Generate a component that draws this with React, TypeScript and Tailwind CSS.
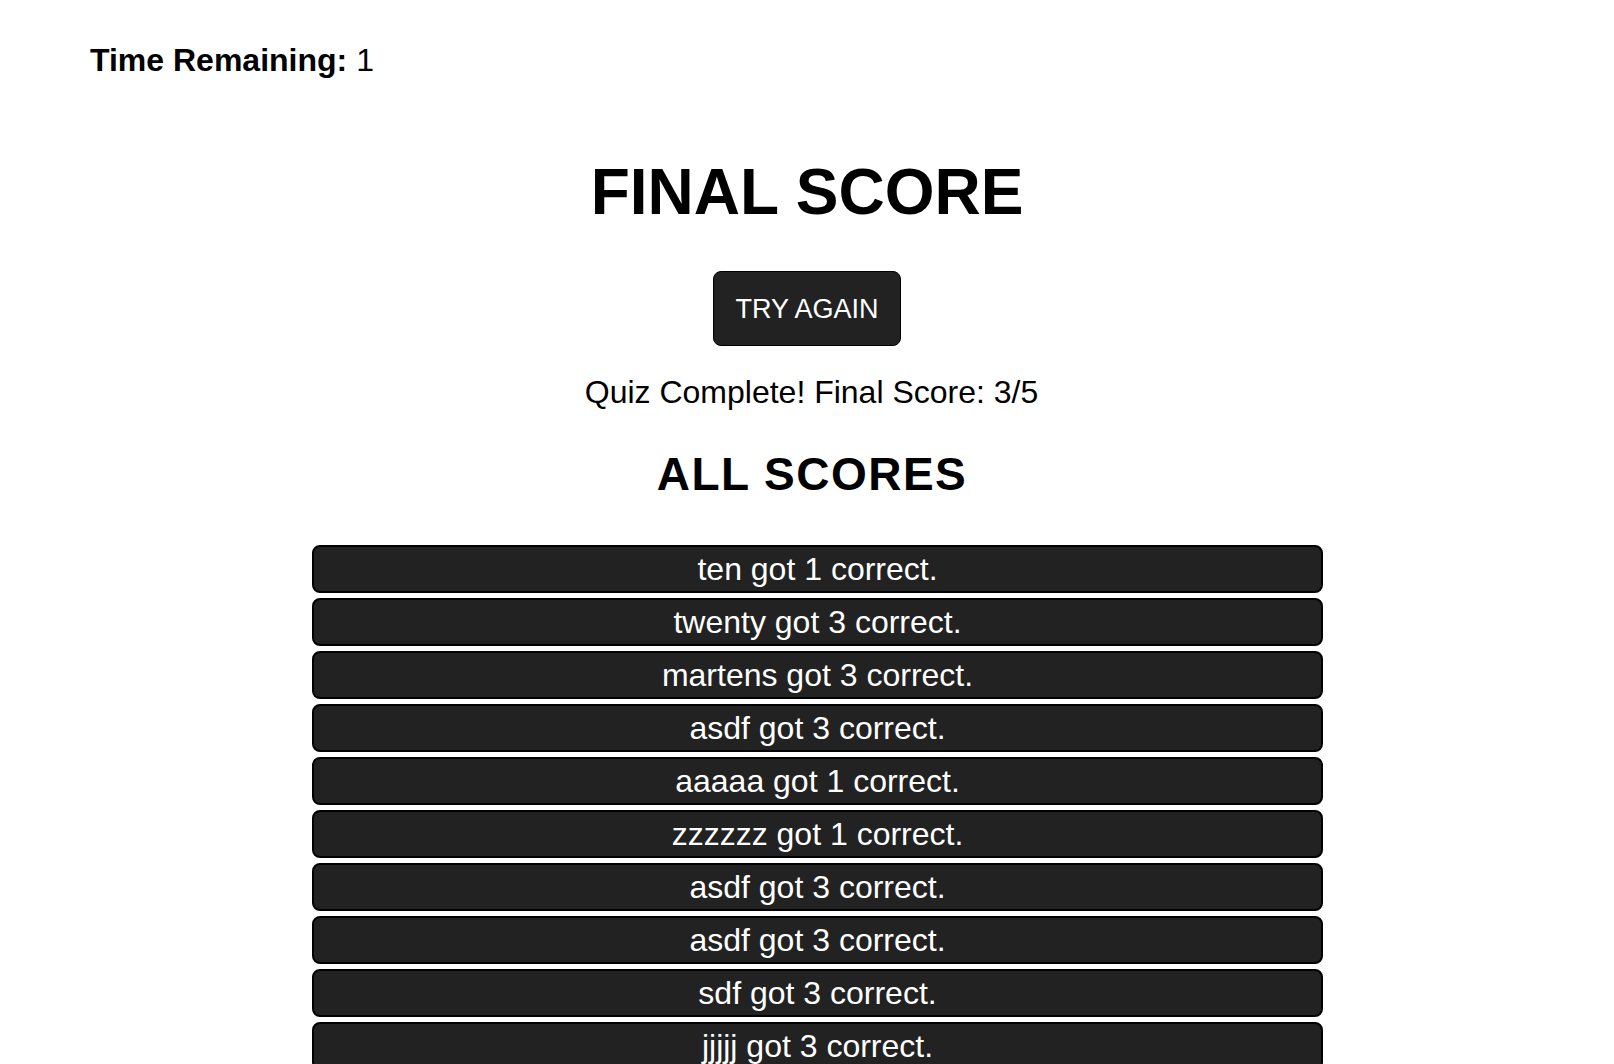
import React from "react";

const scores = [
  "ten got 1 correct.",
  "twenty got 3 correct.",
  "martens got 3 correct.",
  "asdf got 3 correct.",
  "aaaaa got 1 correct.",
  "zzzzzz got 1 correct.",
  "asdf got 3 correct.",
  "asdf got 3 correct.",
  "sdf got 3 correct.",
  "jjjjj got 3 correct.",
];

export default function App() {
  return (
    <div className="w-full h-[1064px] overflow-hidden bg-white text-black font-['Liberation_Sans',Arial,Helvetica,sans-serif]">
      <p className="pt-[42px] pl-[90px] text-[32px] leading-[37px]">
        <b className="font-bold">Time Remaining:</b> 1
      </p>
      <h1 className="mt-[76px] text-center text-[64px] leading-[74px] font-bold">FINAL SCORE</h1>
      <div className="mt-[42px] flex justify-center">
        <button className="h-[75px] px-[21px] flex items-center rounded-[8px] border border-black bg-[#222222] text-white text-[27px] leading-[30px]">
          TRY AGAIN
        </button>
      </div>
      <p className="mt-[28px] pl-[9px] text-center text-[32px] leading-[37px]">Quiz Complete! Final Score: 3/5</p>
      <h2 className="mt-[37px] pl-[10px] text-center text-[46px] leading-[53px] font-bold tracking-[1.5px]">ALL SCORES</h2>
      <div className="mt-[44px] flex justify-center pl-[21px]">
        <ul className="w-[1011px] flex flex-col gap-[5px]">
          {scores.map((s, i) => (
            <li
              key={i}
              className="h-[48px] flex items-center justify-center rounded-[8px] border-2 border-black bg-[#222222] text-white text-[32px] leading-[37px]"
            >
              {s}
            </li>
          ))}
        </ul>
      </div>
    </div>
  );
}
